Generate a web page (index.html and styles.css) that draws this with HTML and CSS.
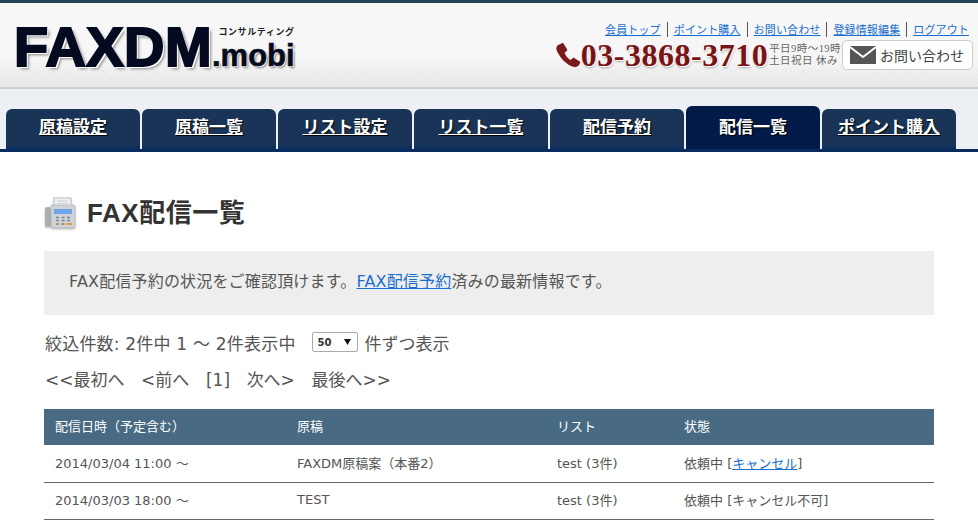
FILE: index.html
```html
<!DOCTYPE html>
<html lang="ja">
<head>
<meta charset="utf-8">
<title>FAX配信一覧</title>
<link rel="stylesheet" href="styles.css">
</head>
<body>
<header class="site-header">
  <div class="logo">
    <span class="logo-main">FAXDM</span>
    <span class="logo-side">
      <span class="logo-sub">コンサルティング</span>
      <span class="logo-mobi">.mobi</span>
    </span>
  </div>
  <div class="header-right">
    <nav class="util-nav">
      <a href="#">会員トップ</a>
      <a href="#">ポイント購入</a>
      <a href="#">お問い合わせ</a>
      <a href="#">登録情報編集</a>
      <a href="#">ログアウト</a>
    </nav>
    <div class="contact">
      <svg class="phone-icon" viewBox="0 0 26 26" width="26" height="26" aria-hidden="true">
        <path d="M3 3 L8 0.8 L12.5 8 L9.5 11 C11 14.5 13 16.5 15.5 18 L18.5 15.5 L25.5 20 L24 23 C22 25.5 19 25.5 16 24 C9.5 21 4 14 1.5 8 C1 6 1.5 4 3 3 Z" fill="#7a1a1a"/>
      </svg>
      <span class="phone-number">03-3868-3710</span>
      <span class="hours">平日9時～19時<br>土日祝日 休み</span>
      <a class="contact-button" href="#">
        <svg viewBox="0 0 26 18" width="26" height="18" aria-hidden="true">
          <rect width="26" height="18" fill="#555"/>
          <path d="M0 1 L13 11 L26 1" fill="none" stroke="#fff" stroke-width="2"/>
        </svg>
        <span>お問い合わせ</span>
      </a>
    </div>
  </div>
</header>
<nav class="tabs">
  <a class="tab" href="#">原稿設定</a>
  <a class="tab" href="#">原稿一覧</a>
  <a class="tab" href="#">リスト設定</a>
  <a class="tab" href="#">リスト一覧</a>
  <a class="tab" href="#">配信予約</a>
  <a class="tab tab-active" href="#">配信一覧</a>
  <a class="tab" href="#">ポイント購入</a>
</nav>
<main class="content">
  <h1 class="page-title">
    <svg class="fax-icon" viewBox="0 0 32 32" width="32" height="32" aria-hidden="true">
      <rect x="10" y="1" width="17" height="10" fill="#eef0f2" stroke="#b5bbc0" stroke-width="0.8"/>
      <path d="M13 4h11M13 6.5h11" stroke="#c4c9cd" stroke-width="0.8"/>
      <rect x="1" y="10" width="6" height="20" rx="2.5" fill="#a9aeb2"/>
      <rect x="7" y="8" width="24" height="23" rx="1.5" fill="#cfd3d6"/>
      <rect x="7" y="8" width="24" height="23" rx="1.5" fill="none" stroke="#a8adb1" stroke-width="0.6"/>
      <rect x="10" y="12" width="18" height="5" fill="#6ea4e8"/>
      <path d="M12 20.5h3M17.5 20.5h3M23 20.5h3M12 23.5h3M17.5 23.5h3M23 23.5h3" stroke="#7d8388" stroke-width="1.6"/>
      <path d="M12 27h3" stroke="#e07a2a" stroke-width="1.6"/>
      <path d="M17.5 27h3" stroke="#7d8388" stroke-width="1.6"/>
      <path d="M22 27h6" stroke="#f08a1d" stroke-width="1.6"/>
    </svg>
    FAX配信一覧
  </h1>
  <p class="notice">FAX配信予約の状況をご確認頂けます。<a href="#">FAX配信予約</a>済みの最新情報です。</p>
  <div class="filter-row">
    <span class="filter-count">絞込件数: 2件中 1 ～ 2件表示中</span>
    <select class="per-page"><option>50</option></select>
    <span>件ずつ表示</span>
  </div>
  <div class="pager">
    <span>&lt;&lt;最初へ</span>
    <span>&lt;前へ</span>
    <span>[1]</span>
    <span>次へ&gt;</span>
    <span>最後へ&gt;&gt;</span>
  </div>
  <table class="list">
    <thead>
      <tr>
        <th class="col-date">配信日時（予定含む）</th>
        <th class="col-doc">原稿</th>
        <th class="col-list">リスト</th>
        <th>状態</th>
      </tr>
    </thead>
    <tbody>
      <tr>
        <td>2014/03/04 11:00 ～</td>
        <td>FAXDM原稿案（本番2）</td>
        <td>test (3件)</td>
        <td>依頼中 [<a href="#">キャンセル</a>]</td>
      </tr>
      <tr>
        <td>2014/03/03 18:00 ～</td>
        <td>TEST</td>
        <td>test (3件)</td>
        <td>依頼中 [キャンセル不可]</td>
      </tr>
    </tbody>
  </table>
</main>
</body>
</html>
```

FILE: styles.css
```css
* { box-sizing: border-box; }
html, body { margin: 0; padding: 0; height: 531px; overflow: hidden; }
body {
  background: #fff;
  color: #555;
  font-family: "DejaVu Sans", "Noto Sans CJK JP", sans-serif;
}
a { color: #1a6ecf; }

.site-header {
  height: 89px;
  border-top: 3px solid #264257;
  border-bottom: 2px solid #cfcfcf;
  background:
    repeating-linear-gradient(45deg, rgba(0,0,0,0.025) 0 1px, transparent 1px 3px) 0 66px / 100% 18px no-repeat,
    linear-gradient(#f8f8f8, #f6f6f6 64%, #e9e9e9);
  display: flex;
  justify-content: space-between;
  padding: 0 5px 0 14px;
}

.logo { display: flex; align-items: flex-end; height: 71px; }
.logo-main {
  font: 900 56px/55px "Liberation Sans", sans-serif;
  color: #040a20;
  -webkit-text-stroke: 2px #040a20;
  text-shadow: 2px 2px 0 #fff, -1px -1px 0 #fff, 3px 3px 3px #888;
  letter-spacing: 0.4px;
}
.logo-side { display: flex; flex-direction: column; align-items: flex-end; margin-bottom: 2px; }
.logo-sub {
  font: 700 9px/12px "Noto Sans CJK JP", sans-serif;
  color: #222;
  letter-spacing: 0.6px;
  margin-bottom: 2px;
  text-shadow: 1px 1px 0 #fff;
}
.logo-mobi {
  font: 700 31px/32px "Liberation Sans", sans-serif;
  color: #040a20;
  -webkit-text-stroke: 0.6px #040a20;
  text-shadow: 1px 1px 0 #fff, 2px 2px 2px #888;
}

.header-right { display: flex; flex-direction: column; align-items: flex-end; padding-top: 19px; }
.util-nav { display: flex; font: 11px/15px "Noto Sans CJK JP", sans-serif; letter-spacing: 0.14px; padding-right: 4px; }
.util-nav a { padding: 0 6px; border-left: 1px solid #555; }
.util-nav a:first-child { border-left: 0; }
.util-nav a:last-child { padding-right: 0; }

.contact { display: flex; align-items: center; }
.phone-number {
  font: 700 32px/36px "Liberation Serif", serif;
  color: #7a1414;
  text-shadow: 1px 1px 0 #fff, 1px 2px 2px #aaa;
  letter-spacing: 0.5px;
}
.hours {
  font: 10.5px/12px "Liberation Serif", "Noto Sans CJK JP", serif;
  letter-spacing: 0.45px;
  color: #666;
  margin: 0 1px;
  white-space: nowrap;
}
.contact-button {
  width: 131px;
  height: 30px;
  display: flex;
  align-items: center;
  gap: 4px;
  padding-left: 7px;
  background: #fff;
  border: 1px solid #ccc;
  border-radius: 5px;
  color: #444;
  font: 14px/1 "Noto Sans CJK JP", sans-serif;
  text-decoration: none;
}

.tabs {
  height: 63px;
  background: #ecf0f4;
  border-bottom: 3px solid #0a2c5c;
  padding: 20px 0 0 6px;
  display: flex;
  align-items: flex-end;
  gap: 2px;
}
.tab {
  width: 134px;
  height: 40px;
  display: flex;
  align-items: center;
  justify-content: center;
  border-radius: 6px 6px 0 0;
  background: linear-gradient(#1a3458, #1a3458 88%, #06305f);
  color: #fff;
  font: 700 17px/1 "Noto Sans CJK JP", sans-serif;
  text-shadow: 1px 1px 1px #000;
  padding-bottom: 7px;
}
.tab-active {
  height: 43px;
  padding-bottom: 4px;
  background: #011a47;
  text-decoration: none;
}

.content { padding: 0 44px; }
.page-title {
  display: flex;
  align-items: center;
  gap: 11px;
  margin: 45px 0 0;
  height: 32px;
  font: 700 26px/32px "Liberation Sans", "Noto Sans CJK JP", sans-serif;
  letter-spacing: 0.55px;
  color: #333;
}
.fax-icon { filter: drop-shadow(0 1px 1px #bbb); }
.notice {
  margin: 22px 0 0;
  height: 64px;
  padding: 0 25px;
  background: #eee;
  font-size: 16px;
  letter-spacing: 0.18px;
  line-height: 62px;
}
.filter-row {
  display: flex;
  align-items: center;
  margin-top: 15px;
  height: 24px;
  font-size: 17px;
  padding-left: 1px;
}
.filter-count { letter-spacing: 0.2px; }
.per-page {
  appearance: none;
  width: 46px;
  height: 20px;
  margin: 0 7px 0 16px;
  padding: 0 0 0 5px;
  font: 700 10px "DejaVu Sans", sans-serif;
  color: #333;
  background: #fff url("data:image/svg+xml,%3Csvg xmlns='http://www.w3.org/2000/svg' width='7' height='6'%3E%3Cpath d='M0 0h7L3.5 6z' fill='%23111'/%3E%3C/svg%3E") no-repeat right 6px center;
  border: 1px solid #aaa;
  border-radius: 2px;
}
.pager {
  display: flex;
  gap: 16.6px;
  margin-top: 14px;
  height: 24px;
  font-size: 17px;
  line-height: 24px;
  padding-left: 1px;
}

.list {
  width: 890px;
  margin-top: 17px;
  border-collapse: collapse;
  font-size: 13px;
  table-layout: fixed;
}
.list th {
  height: 36px;
  padding: 0 11px 3px;
  background: #486a83;
  color: #fff;
  font-weight: 400;
  font-size: 13px;
  text-align: left;
}
.list td {
  height: 37px;
  padding: 0 11px 2px;
  border-bottom: 1px solid #666;
}
.col-date { width: 242px; }
.col-doc { width: 260px; }
.col-list { width: 127px; }
```
